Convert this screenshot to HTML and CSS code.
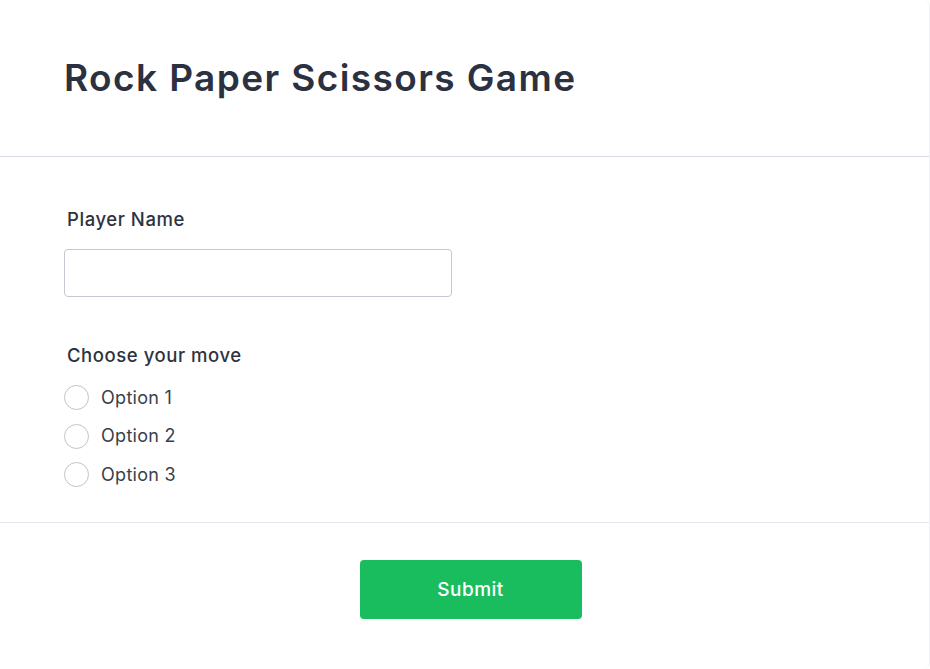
FILE: index.html
```html
<!DOCTYPE html>
<html lang="en">
<head>
<meta charset="utf-8">
<title>Rock Paper Scissors Game</title>
<link rel="stylesheet" href="styles.css">
</head>
<body>
<div class="card">
  <header class="card-header">
    <h1 class="title">Rock Paper Scissors Game</h1>
  </header>
  <section class="card-body">
    <div class="field">
      <label class="label" for="player">Player Name</label>
      <input class="input" id="player" type="text">
    </div>
    <div class="field field-move">
      <span class="label">Choose your move</span>
      <div class="options">
        <label class="option"><input type="radio" name="move" class="radio"><span>Option 1</span></label>
        <label class="option"><input type="radio" name="move" class="radio"><span>Option 2</span></label>
        <label class="option"><input type="radio" name="move" class="radio"><span>Option 3</span></label>
      </div>
    </div>
  </section>
  <footer class="card-footer">
    <button class="submit" type="button">Submit</button>
  </footer>
</div>
</body>
</html>
```
FILE: styles.css
```css
* { box-sizing: border-box; }
html, body { margin: 0; padding: 0; background: #ffffff; }
body {
  font-family: Inter, "Noto Sans", sans-serif;
  color: #2d3342;
}
.card {
  width: 930px;
  height: 669px;
  border-right: 1px solid #f0f1f4;
  border-radius: 0 6px 6px 0;
  display: flex;
  flex-direction: column;
}
.card-header {
  height: 157px;
  border-bottom: 1px solid #d9dbe3;
  padding: 0 64px;
  display: flex;
  align-items: center;
}
.title {
  margin: 0;
  font-size: 37px;
  font-weight: 600;
  color: #2b3140;
  letter-spacing: 1.4px;
  padding-bottom: 2px;
}
.card-body {
  padding: 50px 64px 35px;
  border-bottom: 1px solid #e5e6ee;
}
.field { display: flex; flex-direction: column; }
.field-move { margin-top: 46px; }
.label {
  font-size: 18.5px;
  font-weight: 500;
  color: #2d3342;
  padding-left: 3px;
  line-height: 24px;
  letter-spacing: 0.55px;
}
.input {
  margin-top: 18px;
  width: 388px;
  height: 48px;
  border: 1px solid #c4c8d2;
  border-radius: 4px;
  font: inherit;
}
.options {
  margin-top: 18px;
  display: flex;
  flex-direction: column;
  gap: 13.5px;
}
.option {
  display: flex;
  align-items: center;
  gap: 12px;
  font-size: 18px;
  color: #3a3f4c;
  line-height: 24px;
  letter-spacing: 0.3px;
}
.radio {
  appearance: none;
  margin: 0;
  width: 25px;
  height: 25px;
  border: 1px solid #bfc3cd;
  border-radius: 50%;
  background: #fff;
}
.card-footer {
  flex: 1;
  display: flex;
  justify-content: center;
  align-items: flex-start;
  padding-top: 37px;
  padding-left: 12px;
}
.submit {
  width: 222px;
  height: 59px;
  border: none;
  border-radius: 4px;
  background: #1abd5d;
  color: #ffffff;
  font-family: Inter, sans-serif;
  font-size: 19px;
  font-weight: 500;
  letter-spacing: 0.45px;
}
```
